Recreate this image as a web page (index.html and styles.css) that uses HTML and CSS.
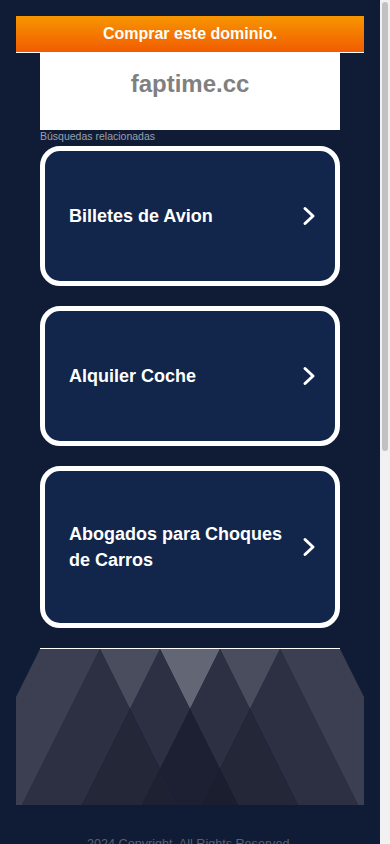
FILE: index.html
```html
<!DOCTYPE html>
<html lang="es">
<head>
<meta charset="utf-8">
<meta name="viewport" content="width=device-width, initial-scale=1">
<title>faptime.cc</title>
<link rel="stylesheet" href="styles.css">
</head>
<body>
<div class="viewport">
  <main class="page">
    <a class="buy" href="#">Comprar este dominio.</a>
    <div class="domain">faptime.cc</div>
    <div class="related">Búsquedas relacionadas</div>
    <a class="card" href="#">
      <span class="card-text">Billetes de Avion</span>
      <svg class="chev" width="14" height="20" viewBox="0 0 14 20"><polyline points="3,2.5 11,10 3,17.5" fill="none" stroke="#fff" stroke-width="3" stroke-linecap="round" stroke-linejoin="round"/></svg>
    </a>
    <a class="card" href="#">
      <span class="card-text">Alquiler Coche</span>
      <svg class="chev" width="14" height="20" viewBox="0 0 14 20"><polyline points="3,2.5 11,10 3,17.5" fill="none" stroke="#fff" stroke-width="3" stroke-linecap="round" stroke-linejoin="round"/></svg>
    </a>
    <a class="card" href="#">
      <span class="card-text">Abogados para Choques de Carros</span>
      <svg class="chev" width="14" height="20" viewBox="0 0 14 20"><polyline points="3,2.5 11,10 3,17.5" fill="none" stroke="#fff" stroke-width="3" stroke-linecap="round" stroke-linejoin="round"/></svg>
    </a>
    <div class="divider"></div>
    <svg class="art" width="348" height="156" viewBox="0 0 348 156">
      <polygon fill="#3b3f51" points="24,0 84,0 6,156 0,156 0,48"/>
      <polygon fill="#4a4d5e" points="84,0 144,0 114,60"/>
      <polygon fill="#636675" points="144,0 204,0 174,60"/>
      <polygon fill="#4a4d5e" points="204,0 264,0 234,60"/>
      <polygon fill="#3b3f51" points="264,0 324,0 348,48 348,156 342,156"/>
      <polygon fill="#2c3042" points="84,0 114,60 66,156 6,156"/>
      <polygon fill="#2c3042" points="144,0 174,60 144,120 114,60"/>
      <polygon fill="#2c3042" points="204,0 234,60 204,120 174,60"/>
      <polygon fill="#2c3042" points="264,0 342,156 282,156 234,60"/>
      <polygon fill="#232738" points="114,60 144,120 126,156 66,156"/>
      <polygon fill="#232738" points="234,60 282,156 222,156 204,120"/>
      <polygon fill="#1c2032" points="174,60 204,120 186,156 162,156 144,120"/>
      <polygon fill="#1d2132" points="144,120 162,156 126,156"/>
      <polygon fill="#1a1e2f" points="204,120 222,156 186,156"/>
    </svg>
    <footer class="footer">2024 Copyright. All Rights Reserved.</footer>
  </main>
</div>
<div class="scrollbar"><div class="thumb"></div></div>
</body>
</html>
```

FILE: styles.css
```css
html, body {
  margin: 0;
  padding: 0;
  overflow: hidden;
  background: #101c36;
}
body {
  font-family: "Liberation Sans", Arial, sans-serif;
}
.viewport {
  width: 380px;
}
.page {
  margin: 0 16px;
  padding-top: 16px;
  display: flex;
  flex-direction: column;
}
.buy {
  display: block;
  height: 36px;
  line-height: 36px;
  text-align: center;
  color: #fff;
  font-weight: bold;
  font-size: 16px;
  text-decoration: none;
  background: linear-gradient(#f79600, #f15c00);
  border-bottom: 1px solid #fff;
}
.domain {
  margin: 0 24px;
  box-sizing: border-box;
  height: 77px;
  padding-top: 17px;
  background: #fff;
  color: #808080;
  font-weight: bold;
  font-size: 24px;
  line-height: 28px;
  text-align: center;
}
.related {
  margin: 0 24px 4px;
  font-size: 10.5px;
  line-height: 12px;
  color: #9aa0ad;
}
.card {
  margin: 0 24px 20px;
  box-sizing: border-box;
  min-height: 140px;
  padding: 50px 19px 50px 24px;
  border: 5px solid #fff;
  border-radius: 20px;
  background: #12264b;
  display: flex;
  align-items: center;
  gap: 16px;
  text-decoration: none;
}
.card-text {
  flex: 1;
  color: #fff;
  font-weight: bold;
  font-size: 18px;
  line-height: 26px;
}
.chev {
  flex: none;
  display: block;
}
.divider {
  margin: 0 24px;
  height: 1px;
  background: #fff;
}
.art {
  display: block;
}
.footer {
  margin-top: 30px;
  text-align: center;
  font-size: 12.6px;
  line-height: 18px;
  color: #59606f;
}
.scrollbar {
  position: fixed;
  top: 0;
  right: 0;
  width: 10px;
  height: 100vh;
  background: #f1f1f1;
}
.thumb {
  position: absolute;
  top: 2px;
  left: 2px;
  width: 6px;
  height: 449px;
  border-radius: 3px;
  background: #c1c1c1;
}
```
